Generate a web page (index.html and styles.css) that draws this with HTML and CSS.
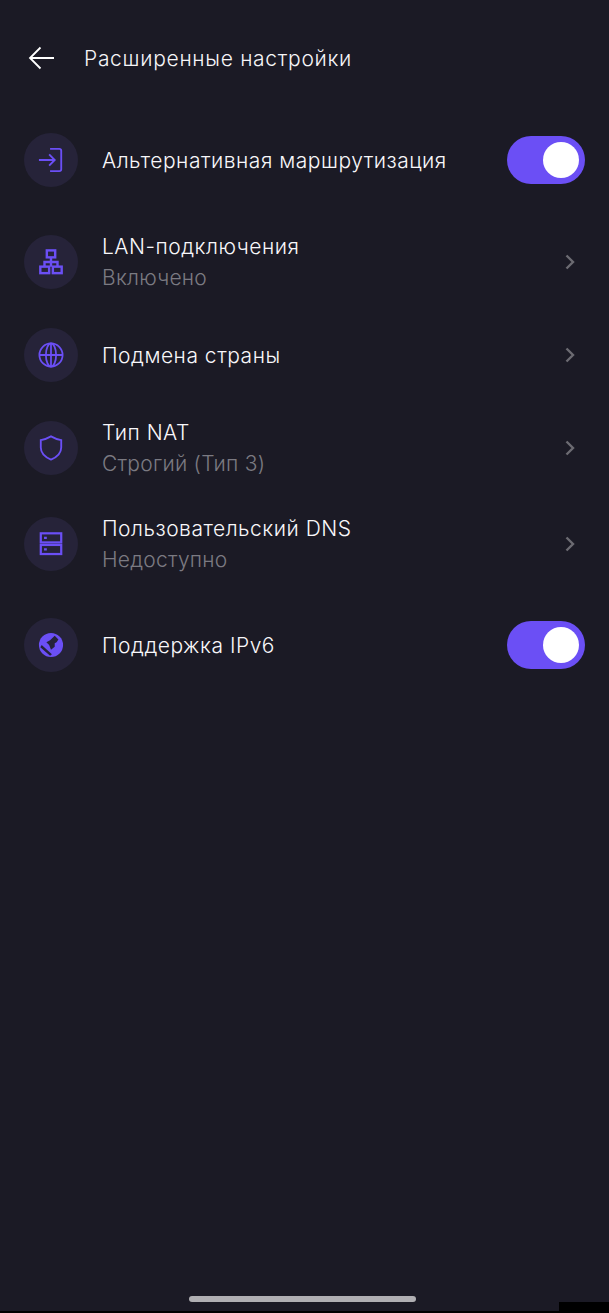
FILE: index.html
```html
<!DOCTYPE html>
<html lang="ru">
<head>
    <meta charset="UTF-8">
    <meta name="viewport" content="width=device-width, initial-scale=1.0">
    <title>Расширенные настройки</title>
    <link rel="stylesheet" href="styles.css">
</head>
<body>
    <div class="screen">
        <header class="top-bar">
            <svg class="back-icon" viewBox="0 0 26 24" fill="none" stroke="#fff" stroke-width="1.8">
                <path d="M26 12H2M12.5 1.5L2 12l10.5 10.5"/>
            </svg>
            <h1>Расширенные настройки</h1>
        </header>

        <div class="settings">
            <div class="row row-first">
                <div class="icon-circle">
                    <svg viewBox="0 0 28 28" fill="none" stroke="#6b4ff5" stroke-width="2">
                        <path d="M13 2h10a2 2 0 0 1 2 2v20a2 2 0 0 1-2 2H13"/>
                        <path d="M1 14h17M12 8l6 6-6 6"/>
                    </svg>
                </div>
                <div class="row-text">
                    <div class="row-title">Альтернативная маршрутизация</div>
                </div>
                <div class="toggle"><div class="knob"></div></div>
            </div>

            <div class="row row-lan">
                <div class="icon-circle">
                    <svg viewBox="0 0 28 28" fill="none" stroke="#6b4ff5" stroke-width="2.6">
                        <rect x="9.500" y="1.500" width="9" height="7.500"/>
                        <rect x="2.500" y="19" width="9.500" height="7"/>
                        <rect x="16" y="19" width="9.500" height="7"/>
                        <path d="M14 9v10M7 19v-5h14v5"/>
                    </svg>
                </div>
                <div class="row-text">
                    <div class="row-title">LAN-подключения</div>
                    <div class="row-sub">Включено</div>
                </div>
                <svg class="chevron" viewBox="0 0 10 16" fill="none" stroke="#6c6b72" stroke-width="2.4">
                    <path d="M1.500 1.500L8 8l-6.500 6.500"/>
                </svg>
            </div>

            <div class="row">
                <div class="icon-circle">
                    <svg viewBox="0 0 28 28" fill="none" stroke="#6b4ff5" stroke-width="1.900">
                        <circle cx="14" cy="14" r="12.500"/>
                        <ellipse cx="14" cy="14" rx="5.500" ry="12.500"/>
                        <path d="M1.500 14h25M14 1.500v25"/>
                    </svg>
                </div>
                <div class="row-text">
                    <div class="row-title">Подмена страны</div>
                </div>
                <svg class="chevron" viewBox="0 0 10 16" fill="none" stroke="#6c6b72" stroke-width="2.4">
                    <path d="M1.500 1.500L8 8l-6.500 6.500"/>
                </svg>
            </div>

            <div class="row">
                <div class="icon-circle">
                    <svg viewBox="0 0 28 28" fill="none" stroke="#6b4ff5" stroke-width="2">
                        <path d="M14 1.500c3.500 2 7 3.500 11 4v8c0 6-5 10.500-11 13C8 24 3 19.500 3 13.500v-8c4-.5 7.500-2 11-4z"/>
                    </svg>
                </div>
                <div class="row-text">
                    <div class="row-title">Тип NAT</div>
                    <div class="row-sub">Строгий (Тип 3)</div>
                </div>
                <svg class="chevron" viewBox="0 0 10 16" fill="none" stroke="#6c6b72" stroke-width="2.4">
                    <path d="M1.500 1.500L8 8l-6.500 6.500"/>
                </svg>
            </div>

            <div class="row row-dns">
                <div class="icon-circle">
                    <svg viewBox="0 0 28 28" fill="none" stroke="#6b4ff5" stroke-width="2.4">
                        <rect x="3" y="2.500" width="22" height="9.800"/>
                        <rect x="3" y="15" width="22" height="9.800"/>
                        <path d="M6.500 7.400h3M6.500 19.900h3"/>
                    </svg>
                </div>
                <div class="row-text">
                    <div class="row-title">Пользовательский DNS</div>
                    <div class="row-sub">Недоступно</div>
                </div>
                <svg class="chevron" viewBox="0 0 10 16" fill="none" stroke="#6c6b72" stroke-width="2.4">
                    <path d="M1.500 1.500L8 8l-6.500 6.500"/>
                </svg>
            </div>

            <div class="row row-ipv6">
                <div class="icon-circle">
                    <svg viewBox="0 0 28 28">
                        <circle cx="14" cy="14" r="13" fill="#6b4ff5"/>
                        <path fill="#262339" d="M9 11l4-2 5-5 4 4-2 3-2 1v4l-4 3-2-5zM4 14l11 10-2 1.500L2.500 16.500z"/>
                    </svg>
                </div>
                <div class="row-text">
                    <div class="row-title">Поддержка IPv6</div>
                </div>
                <div class="toggle"><div class="knob"></div></div>
            </div>
        </div>

        <div class="home-bar"></div>
        <div class="corner-black"></div>
        <div class="bottom-black"></div>
    </div>
</body>
</html>
```

FILE: styles.css
```css
* {
    margin: 0;
    padding: 0;
    box-sizing: border-box;
    font-family: Inter, 'Noto Sans', sans-serif;
}

body {
    background: #1b1a25;
}

.screen {
    position: relative;
    height: 1313px;
    overflow: hidden;
}

.top-bar {
    display: flex;
    align-items: center;
    height: 24px;
    margin: 46px 0 0 28px;
}

.back-icon {
    width: 26px;
    height: 24px;
    margin-right: 30px;
}

h1 {
    color: #f6f5f8;
    font-size: 21px;
    font-weight: 350;
    letter-spacing: 0.7px;
}

.settings {
    display: flex;
    flex-direction: column;
    padding: 63px 24px 0;
}

.row {
    display: flex;
    align-items: center;
    height: 54px;
    margin-bottom: 39px;
}

.row-first {
    margin-bottom: 48px;
}

.row-dns {
    margin-top: 3px;
    margin-bottom: 47px;
}

.icon-circle {
    width: 54px;
    height: 54px;
    flex-shrink: 0;
    border-radius: 50%;
    background: #262339;
    display: flex;
    align-items: center;
    justify-content: center;
    margin-right: 24px;
}

.icon-circle svg {
    width: 26px;
    height: 26px;
}

.row-text {
    flex: 1;
    padding-top: 1px;
}

.row-title {
    color: #f8f7fa;
    font-size: 21px;
    font-weight: 350;
    letter-spacing: 0.52px;
    line-height: 30px;
}

.row-sub {
    color: #7b7a82;
    font-size: 21px;
    font-weight: 300;
    letter-spacing: 0.25px;
    line-height: 30px;
    margin-top: 1px;
}

.toggle {
    width: 78px;
    height: 48px;
    border-radius: 24px;
    background: #6b4ff5;
    display: flex;
    align-items: center;
    justify-content: flex-end;
    padding-right: 6px;
}

.knob {
    width: 36px;
    height: 36px;
    border-radius: 50%;
    background: #fff;
}

.chevron {
    width: 10px;
    height: 16px;
    margin-right: 10px;
}

.home-bar {
    position: absolute;
    left: 189px;
    top: 1296px;
    width: 227px;
    height: 6px;
    border-radius: 3px;
    background: #b0afb3;
}

.corner-black {
    position: absolute;
    right: 0;
    bottom: 0;
    width: 50px;
    height: 11px;
    background: #000;
}

.bottom-black {
    position: absolute;
    left: 0;
    right: 0;
    bottom: 0;
    height: 2px;
    background: #000;
}
```
